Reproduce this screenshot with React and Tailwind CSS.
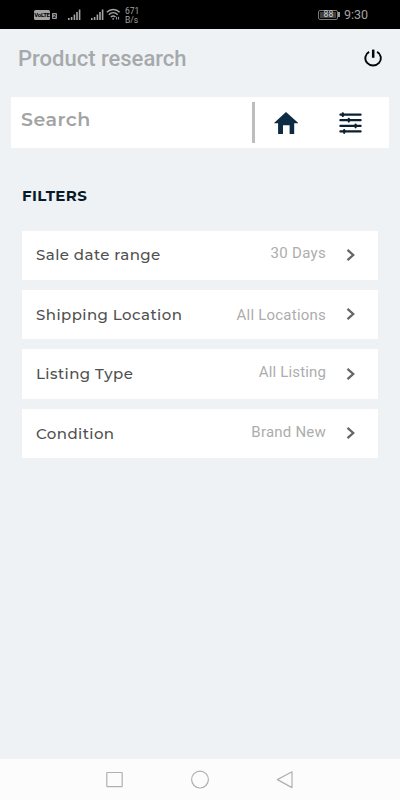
const filters = [
  { label: "Sale date range", value: "30 Days", valueClass: "-mt-[3px] tracking-[0.3px]" },
  { label: "Shipping Location", value: "All Locations", valueClass: "mt-[1px] tracking-[0.22px]" },
  { label: "Listing Type", value: "All Listing", valueClass: "-mt-[3px] tracking-[0.15px]" },
  { label: "Condition", value: "Brand New", valueClass: "-mt-[2px] tracking-[0.22px]" },
];

function Signal() {
  return (
    <svg width="13" height="12" viewBox="0 0 13 12" fill="#a3a3a3">
      <rect x="0" y="9" width="1.6" height="2" />
      <rect x="2.8" y="8" width="1.6" height="3" />
      <rect x="5.6" y="5.5" width="1.6" height="5.5" />
      <rect x="8.2" y="3" width="1.6" height="8" />
      <rect x="10.8" y="0.5" width="1.6" height="10.5" />
    </svg>
  );
}

function Wifi() {
  return (
    <svg width="15" height="13" viewBox="0 0 15 13" fill="none" stroke="#a3a3a3" strokeWidth="1.4">
      <path d="M0.8 4.2C4.5 0.5 10 0.5 13.7 4.2" />
      <path d="M2.8 6.7C5.4 4.1 9.1 4.1 11.7 6.7" />
      <path d="M4.8 9C6.3 7.6 8 7.6 9.5 9" />
      <circle cx="7.2" cy="10.8" r="0.9" fill="#a3a3a3" stroke="none" />
      <path d="M10.6 8.8v2.7M12.6 8.8v2.7" strokeWidth="1" />
    </svg>
  );
}

function StatusBar() {
  return (
    <div className="flex h-[29px] items-center bg-black pr-[32px] pl-[34px] text-[#a3a3a3]">
      <div className="flex h-[10px] w-[16px] items-center justify-center rounded-[1.5px] bg-[#a3a3a3] text-[6px] leading-none font-bold tracking-[-0.3px] text-black">
        VoLTE
      </div>
      <div className="mt-[3px] ml-[2px] flex h-[6px] w-[5px] items-center justify-center rounded-[1px] bg-[#9a9a9a] text-[6px] leading-none font-bold text-black">
        2
      </div>
      <div className="ml-[11px] flex"><Signal /></div>
      <div className="ml-[10px] flex"><Signal /></div>
      <div className="ml-[2px] flex"><Wifi /></div>
      <div className="mt-[2px] ml-[4px] text-[8.5px] leading-[9px]">
        <div>671</div>
        <div>B/s</div>
      </div>
      <div className="ml-auto flex items-center">
        <div className="flex h-[10px] w-[20px] items-center rounded-[2px] border border-[#777] p-px">
          <div className="flex h-full w-[18px] items-center justify-center bg-[#3f3f3f] text-[8.5px] leading-none font-medium text-[#c4c4c4]">
            88
          </div>
        </div>
        <div className="h-[5px] w-[1.5px] bg-[#999]" />
        <div className="mt-[1px] ml-[4px] text-[12.5px] leading-none">9:30</div>
      </div>
    </div>
  );
}

function PowerIcon() {
  return (
    <svg width="20" height="18" viewBox="0 0 20 18" fill="none" stroke="#050505">
      <path d="M6.1 2.9A7.8 7.3 0 1 0 14.1 2.9" strokeWidth="1.9" />
      <path d="M10.2 0.6v8.2" strokeWidth="2.5" />
    </svg>
  );
}

function HomeIcon() {
  return (
    <svg width="24" height="22" viewBox="0 0 24 22" fill="#0d2b42">
      <path d="M12 0L24 10.8V11.2H20.2V22H15.6V13.2H9V22H4.1V11.2H0.3V10.8Z" />
    </svg>
  );
}

function SlidersIcon() {
  return (
    <svg width="23" height="22" viewBox="0 0 23 22" fill="#0c2030" stroke="#0c2030" strokeWidth="2.2" strokeLinecap="round">
      <path d="M1.4 2.7H21.6M1.4 8.2H21.6M1.4 13.9H21.6M1.4 19.4H21.6" />
      <path d="M3.8 1.3v2.8M9.8 6.8v2.8M16.6 12.5v2.8M5.2 18v2.8" />
    </svg>
  );
}

function FilterRow({ label, value, valueClass }) {
  return (
    <div className="flex h-[49.3px] items-center bg-white pr-[22px] pl-[14px]">
      <span className="mt-[1px] font-[Montserrat,Inter,sans-serif] text-[15px] font-medium tracking-[0.43px] text-[#505050]">
        {label}
      </span>
      <span className={`ml-auto text-[15px] text-[#adadad] ${valueClass}`}>{value}</span>
      <svg className="-mt-[1px] ml-[20px]" width="10" height="14" viewBox="0 0 10 14" fill="none" stroke="#666" strokeWidth="2.3">
        <path d="M1.5 1.9L7.2 7L1.5 12.1" />
      </svg>
    </div>
  );
}

export default function App() {
  return (
    <div className="flex h-[800px] w-[400px] flex-col overflow-hidden bg-[#eef2f5] font-[Roboto,sans-serif]">
      <StatusBar />

      {/* Header */}
      <div className="flex h-[68px] items-start justify-between pt-[16px] pr-[17px] pl-[18px]">
        <h1 className="text-[22px] leading-[28px] font-medium text-[#a6a9ab]">Product research</h1>
        <div className="mt-[4px]"><PowerIcon /></div>
      </div>

      {/* Search */}
      <div className="mx-[11px] flex h-[51px] shrink-0 items-center bg-white">
        <div className="w-[241px] pb-[5px] pl-[10px] font-[Montserrat,Inter,sans-serif] text-[19px] font-semibold tracking-[0.5px] text-[#a3a3a3]">
          Search
        </div>
        <div className="h-[41px] w-[2.5px] bg-[#bdbdbd]" />
        <div className="ml-[19px]"><HomeIcon /></div>
        <div className="ml-[41px]"><SlidersIcon /></div>
      </div>

      {/* Filters */}
      <h2 className="mt-[38px] ml-[22px] font-[Montserrat,Inter,sans-serif] text-[15px] leading-[20px] font-bold tracking-[0.4px] text-[#071a26]">
        FILTERS
      </h2>
      <div className="mx-[22px] mt-[24.5px] flex flex-col gap-[10.2px]">
        {filters.map((f) => (
          <FilterRow key={f.label} {...f} />
        ))}
      </div>

      {/* Navigation */}
      <div className="mt-auto flex h-[41px] items-center bg-[#fcfcfc] pl-[106px]">
        <svg width="188" height="20" viewBox="0 0 188 20" fill="none" stroke="#b0b0b0" strokeWidth="1.2">
          <rect x="0.8" y="2.5" width="15.4" height="14.2" rx="0.5" />
          <circle cx="94" cy="9.6" r="8.4" />
          <path d="M171.4 9.6L186 1.8V17.6Z" strokeLinejoin="round" />
        </svg>
      </div>
    </div>
  );
}
